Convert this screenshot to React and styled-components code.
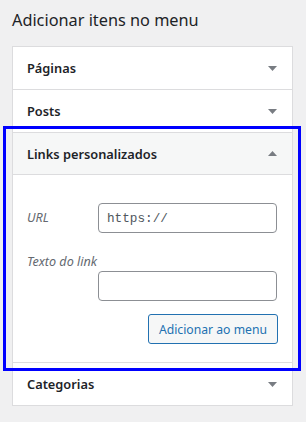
import styled, { createGlobalStyle } from "styled-components";

const GlobalStyle = createGlobalStyle`
  html, body {
    margin: 0;
    padding: 0;
    background: #f0f0f1;
  }
  body {
    font-family: "Noto Sans", "Open Sans", sans-serif;
    color: #1d2327;
  }
  * {
    box-sizing: border-box;
  }
`;

const Page = styled.div`
  position: relative;
  width: 306px;
  height: 422px;
  padding: 0 13px 0 12px;
`;

const Title = styled.h2`
  margin: 0;
  padding-top: 8px;
  height: 46px;
  font-size: 16.3px;
  font-weight: 400;
  line-height: 24px;
  color: #1d2327;
`;

const Panel = styled.div`
  border: 1px solid #dcdcde;
  background: #fff;
`;

const Section = styled.div`
  & + & {
    border-top: 1px solid #dcdcde;
  }
`;

const SectionHead = styled.div`
  display: flex;
  align-items: center;
  justify-content: space-between;
  height: 42px;
  padding: 0 15px 0 14px;
  font-size: 12.8px;
  font-weight: 600;
  color: #1d2327;
  background: ${({ $open }) => ($open ? "#f6f7f7" : "#fff")};
  border-bottom: ${({ $open }) => ($open ? "1px solid #dcdcde" : "none")};
`;

const Body = styled.div`
  padding: 28px 14px 18px 14px;
`;

const Row = styled.div`
  display: flex;
  align-items: center;
`;

const Label = styled.label`
  display: block;
  width: 71px;
  font-size: 12.6px;
  font-style: italic;
  line-height: 18px;
  color: #646970;
`;

const StackLabel = styled(Label)`
  width: auto;
  margin-top: 20px;
`;

const Input = styled.input`
  display: block;
  width: 179px;
  height: 30px;
  margin: 0 1px 0 ${({ $indent }) => ($indent ? "71px" : "0")};
  padding: 0 8px;
  border: 1px solid #8c8f94;
  border-radius: 4px;
  background: #fff;
  font-family: "Liberation Mono", "DejaVu Sans Mono", monospace;
  font-size: 12.7px;
  color: #50575e;
  outline: none;
`;

const Actions = styled.div`
  display: flex;
  justify-content: flex-end;
  margin-top: 13px;
`;

const Button = styled.button`
  height: 30px;
  padding: 0 10px;
  border: 1px solid #2271b1;
  border-radius: 3px;
  background: #f6f7f7;
  color: #2271b1;
  font-family: "Noto Sans", "Open Sans", sans-serif;
  font-size: 12.2px;
  cursor: pointer;
`;

const Highlight = styled.div`
  position: absolute;
  left: 3px;
  top: 126px;
  width: 298px;
  height: 245px;
  border: 3px solid #0000ff;
  pointer-events: none;
`;

function Arrow({ up }) {
  return (
    <svg width="9" height="5" viewBox="0 0 9 5">
      <polygon
        points={up ? "0,5 9,5 4.5,0" : "0,0 9,0 4.5,5"}
        fill="#787c82"
      />
    </svg>
  );
}

export default function App() {
  return (
    <>
      <GlobalStyle />
      <Page>
        <Title>Adicionar itens no menu</Title>
        <Panel>
          <Section>
            <SectionHead>
              Páginas
              <Arrow />
            </SectionHead>
          </Section>
          <Section>
            <SectionHead>
              Posts
              <Arrow />
            </SectionHead>
          </Section>
          <Section>
            <SectionHead $open>
              Links personalizados
              <Arrow up />
            </SectionHead>
            <Body>
              <Row>
                <Label htmlFor="menu-url">URL</Label>
                <Input id="menu-url" defaultValue="https://" />
              </Row>
              <StackLabel htmlFor="menu-text">Texto do link</StackLabel>
              <Input id="menu-text" $indent />
              <Actions>
                <Button>Adicionar ao menu</Button>
              </Actions>
            </Body>
          </Section>
          <Section>
            <SectionHead>
              Categorias
              <Arrow />
            </SectionHead>
          </Section>
        </Panel>
        <Highlight />
      </Page>
    </>
  );
}
